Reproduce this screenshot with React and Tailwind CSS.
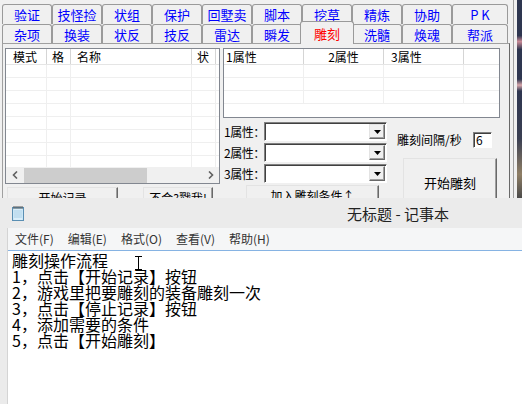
import React from 'react';

const row1 = ['验证', '技怪捡', '状组', '保护', '回墅卖', '脚本', '挖草', '精炼', '协助', 'P K'];
const row2 = ['杂项', '换装', '状反', '技反', '雷达', '瞬发', '雕刻', '洗髓', '焕魂', '帮派'];

const raised =
  'border border-t-[#e3e3e3] border-l-[#e3e3e3] border-r-[#696969] border-b-[#696969] shadow-[inset_-1px_-1px_0_#a0a0a0] bg-[#f0f0f0]';
const sunken =
  'border border-t-[#808080] border-l-[#808080] border-r-white border-b-white shadow-[inset_1px_1px_0_#404040] bg-white';

const Tab = ({ label, wide, selected }) => {
  if (selected) {
    return (
      <div className="relative z-10 -mx-[2px] -mt-[3px] flex h-[23px] w-[54px] items-center justify-center rounded-t-[3px] border border-b-0 border-[#9a9a9a] bg-[#f0f0f0] text-[13px] leading-none text-[#ff0000]">
        {label}
      </div>
    );
  }
  return (
    <div
      className={`flex h-full ${wide ? 'w-[56px]' : 'w-[50px]'} items-center justify-center rounded-t-[3px] border border-b-0 border-[#9a9a9a] bg-[#f0f0f0] text-[13px] leading-none text-[#0000ff]`}
    >
      {label}
    </div>
  );
};

const leftCols = [
  { name: '模式', w: 'w-[41px] pl-[7px]' },
  { name: '格', w: 'w-[24px] pl-[5px]' },
  { name: '名称', w: 'w-[121px] pl-[6px]' },
  { name: '状', w: 'w-[24px] pl-[5px]' },
];

const rightCols = [
  { name: '1属性', w: 'w-[80px] pl-[2px]' },
  { name: '2属性', w: 'w-[80px] justify-center' },
  { name: '3属性', w: 'w-[80px] pl-[7px]' },
  { name: '', w: 'w-[36px]' },
];

const ListView = ({ cols, rows, className, scroll }) => (
  <div className={`${className} flex flex-col overflow-hidden border border-[#828790] bg-white`}>
    <div className="flex h-[16px] shrink-0 border-b border-[#e5e5e5] bg-white">
      {cols.map((c, i) => (
        <div key={i} className={`${c.w} flex shrink-0 items-center border-r border-[#d5d5d5] text-[12px] leading-none text-black`}>
          {c.name}
        </div>
      ))}
    </div>
    <div className="flex-1 overflow-hidden">
      {Array.from({ length: rows }).map((_, r) => (
        <div key={r} className="flex h-[13px] border-b border-[#efefef]">
          {cols.map((c, i) => (
            <div key={i} className={`${c.w} shrink-0 border-r border-[#efefef]`} />
          ))}
        </div>
      ))}
    </div>
    {scroll && (
      <div className="flex h-[16px] shrink-0 items-center bg-[#f0f0f0]">
        <div className="flex w-[17px] justify-center">
          <svg width="6" height="8" viewBox="0 0 6 8">
            <path d="M5 0.5 L1.5 4 L5 7.5" fill="none" stroke="#606060" strokeWidth="1.6" />
          </svg>
        </div>
        <div className="ml-[1px] h-[15px] w-[123px] bg-[#cdcdcd]" />
        <div className="flex-1" />
        <div className="flex w-[17px] justify-center">
          <svg width="6" height="8" viewBox="0 0 6 8">
            <path d="M1 0.5 L4.5 4 L1 7.5" fill="none" stroke="#606060" strokeWidth="1.6" />
          </svg>
        </div>
      </div>
    )}
  </div>
);

const Combo = ({ label }) => (
  <div className="mb-[2px] flex h-[19px] items-center">
    <div className="w-[41px] shrink-0 whitespace-nowrap pl-[1px] text-[12px] leading-none tracking-[-0.5px] text-black">{label}</div>
    <div className={`${sunken} flex h-[19px] w-[123px] shrink-0 justify-end p-[1px]`}>
      <div className={`${raised} flex h-full w-[16px] items-center justify-center`}>
        <svg width="7" height="4" viewBox="0 0 7 4">
          <path d="M0 0 H7 L3.5 4 Z" fill="#000" />
        </svg>
      </div>
    </div>
  </div>
);

const NotepadIcon = () => (
  <svg width="14" height="16" viewBox="0 0 14 16">
    <rect x="1.5" y="2.5" width="11" height="13" fill="#bfe0f2" stroke="#5a8fb3" />
    <rect x="2.5" y="4" width="9" height="11" fill="#d9eefa" />
    <path d="M3 6 H11 M3 8 H11 M3 10 H11 M3 12 H11" stroke="#a9cfe6" strokeWidth="1" />
    <path d="M3 1 V4 M5 1 V4 M7 1 V4 M9 1 V4 M11 1 V4" stroke="#555" strokeWidth="1" />
  </svg>
);

const notes = [
  '雕刻操作流程',
  '1，点击【开始记录】按钮',
  '2，游戏里把要雕刻的装备雕刻一次',
  '3，点击【停止记录】按钮',
  '4，添加需要的条件',
  '5，点击【开始雕刻】',
];

export default function App() {
  return (
    <div className="h-[404px] w-[522px] overflow-hidden bg-[#f0f0f0] font-['Noto_Sans_CJK_SC',sans-serif]">
      {/* game tool window */}
      <div className="flex h-[198px] overflow-hidden">
        <div className="w-[514px] border-r border-[#a0a0a0]">
          <div className="ml-[2px] mt-[4px] flex h-[20px]">
            {row1.map((t, i) => (
              <Tab key={t} label={t} wide={i === row1.length - 1} />
            ))}
          </div>
          <div className="ml-[2px] flex h-[19px] items-start">
            {row2.map((t, i) => (
              <Tab key={t} label={t} wide={i === row2.length - 1} selected={t === '雕刻'} />
            ))}
          </div>
          <div className="ml-[2px] flex h-[160px] w-[508px] gap-[3px] border border-[#a0a0a0] border-r-[#696969] bg-[#f0f0f0] pl-[2px] pt-[4px]">
            {/* left column */}
            <div className="w-[215px]">
              <ListView cols={leftCols} rows={8} className="h-[136px]" scroll />
              <div className="mt-[3px] flex">
                <div className={`${raised} ml-[2px] flex h-[21px] w-[111px] items-center justify-center text-[12px] leading-none`}>
                  开始记录
                </div>
                <div className={`${raised} ml-[25px] flex h-[21px] w-[70px] items-center justify-center text-[12px] leading-none`}>
                  不会?戳我!
                </div>
              </div>
            </div>
            {/* right column */}
            <div className="w-[277px]">
              <ListView cols={rightCols} rows={3} className="h-[70px]" />
              <div className="mt-[4px] flex">
                <div className="w-[165px]">
                  <Combo label="1属性：" />
                  <Combo label="2属性：" />
                  <Combo label="3属性：" />
                  <div className={`${raised} ml-[23px] mt-[2px] flex h-[21px] w-[133px] items-center justify-center text-[12px] leading-none`}>
                    加入雕刻条件↑
                  </div>
                </div>
                <div className="ml-[9px] flex flex-col">
                  <div className="mt-[10px] flex h-[16px] items-center">
                    <div className="w-[76px] text-[12px] leading-none text-black">雕刻间隔/秒</div>
                    <div className={`${sunken} flex h-[16px] w-[19px] items-center pl-[2px] text-[12px] leading-none`}>6</div>
                  </div>
                  <div className={`${raised} ml-[6px] mt-[10px] flex h-[48px] w-[94px] items-center justify-center text-[13px] leading-none`}>
                    开始雕刻
                  </div>
                </div>
              </div>
            </div>
          </div>
        </div>
        <div className="w-[3px] bg-[#f0f0f0]" />
        <div className="flex-1 bg-[linear-gradient(#2e3650_0%,#2e3650_18%,#c98a96_21%,#2e3650_25%,#2e3650_40%,#d8a7ab_43%,#2e3650_46%,#3a3f52_70%,#8f7f66_88%,#4b4a4a_100%)]" />
      </div>

      {/* notepad window */}
      <div className="h-[206px] w-[522px] overflow-hidden bg-[#ebebeb]">
        <div className="flex h-full w-[796px] flex-col">
          <div className="flex h-[30px] shrink-0 items-center">
            <div className="ml-[11px] flex">
              <NotepadIcon />
            </div>
            <div className="flex-1 pr-[25px] text-center text-[15px] leading-none text-[#222]">无标题 - 记事本</div>
          </div>
          <div className="ml-[7px] flex flex-1 flex-col border-l border-[#d4d4d4]">
            <div className="flex h-[22px] shrink-0 items-center bg-[#f5f6f7] text-[12px] leading-none text-[#333]">
              {['文件(F)', '编辑(E)', '格式(O)', '查看(V)', '帮助(H)'].map((m) => (
                <div key={m} className="px-[7px]">
                  {m}
                </div>
              ))}
            </div>
            <div className="relative flex-1 border-t border-[#86b3e3] bg-white pl-[4px] pt-[1px] text-[16px] leading-[16px] text-black">
              {notes.map((l) => (
                <div key={l} className="whitespace-pre">
                  {l}
                </div>
              ))}
              <svg className="absolute left-[127px] top-[5px]" width="7" height="14" viewBox="0 0 7 14">
                <path d="M0 0.5 H7 M3.5 0.5 V13.5 M0 13.5 H7" stroke="#000" strokeWidth="1" fill="none" />
              </svg>
            </div>
          </div>
        </div>
      </div>
    </div>
  );
}
